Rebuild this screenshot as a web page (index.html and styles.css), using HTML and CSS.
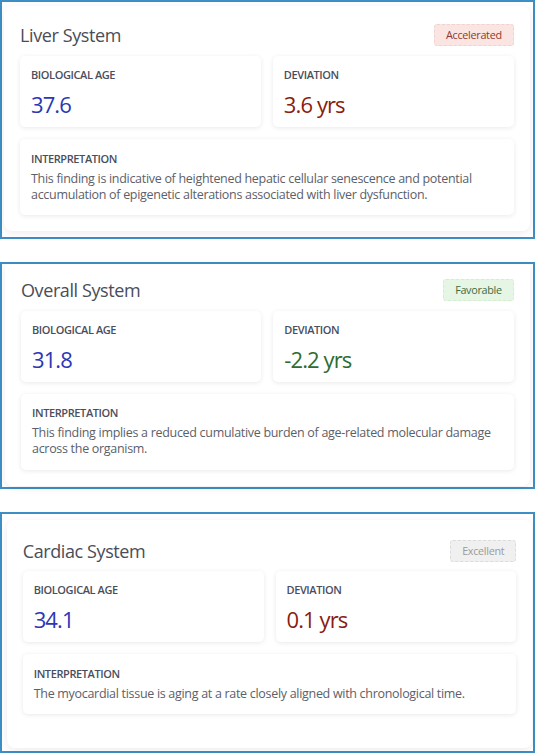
FILE: index.html
```html
<!DOCTYPE html>
<html lang="en">
<head>
<meta charset="utf-8">
<title>System Ages</title>
<link rel="stylesheet" href="styles.css">
</head>
<body>
<main class="page">
  <section class="frame frame-liver">
    <div class="card card-liver">
      <div class="card-head">
        <h2 class="title">Liver System</h2>
        <span class="badge badge-accel">Accelerated</span>
      </div>
      <div class="metrics">
        <div class="box">
          <div class="label">BIOLOGICAL AGE</div>
          <div class="value value-blue">37.6</div>
        </div>
        <div class="box">
          <div class="label">DEVIATION</div>
          <div class="value value-red">3.6 yrs</div>
        </div>
      </div>
      <div class="box box-interp">
        <div class="label">INTERPRETATION</div>
        <p class="text">This finding is indicative of heightened hepatic cellular senescence and potential accumulation of epigenetic alterations associated with liver dysfunction.</p>
      </div>
    </div>
  </section>

  <section class="frame frame-overall">
    <div class="card card-overall">
      <div class="card-head">
        <h2 class="title">Overall System</h2>
        <span class="badge badge-fav">Favorable</span>
      </div>
      <div class="metrics">
        <div class="box">
          <div class="label">BIOLOGICAL AGE</div>
          <div class="value value-blue">31.8</div>
        </div>
        <div class="box">
          <div class="label">DEVIATION</div>
          <div class="value value-green">-2.2 yrs</div>
        </div>
      </div>
      <div class="box box-interp">
        <div class="label">INTERPRETATION</div>
        <p class="text">This finding implies a reduced cumulative burden of age-related molecular damage across the organism.</p>
      </div>
    </div>
  </section>

  <section class="frame frame-cardiac">
    <div class="card card-cardiac">
      <div class="card-head">
        <h2 class="title">Cardiac System</h2>
        <span class="badge badge-exc">Excellent</span>
      </div>
      <div class="metrics">
        <div class="box">
          <div class="label">BIOLOGICAL AGE</div>
          <div class="value value-blue">34.1</div>
        </div>
        <div class="box">
          <div class="label">DEVIATION</div>
          <div class="value value-red">0.1 yrs</div>
        </div>
      </div>
      <div class="box box-interp">
        <div class="label">INTERPRETATION</div>
        <p class="text">The myocardial tissue is aging at a rate closely aligned with chronological time.</p>
      </div>
    </div>
  </section>
</main>
</body>
</html>
```

FILE: styles.css
```css
* {
  box-sizing: border-box;
}

html, body {
  margin: 0;
  padding: 0;
  background: #ffffff;
}

body {
  font-family: "Open Sans", "Noto Sans", sans-serif;
  color: #4a4d57;
}

.page {
  display: flex;
  flex-direction: column;
  width: 535px;
}

.frame {
  border: 2px solid #3d8ec5;
  background: #ffffff;
}

.frame-liver {
  padding: 4px 3.3px 6px 2px;
  margin-bottom: 23px;
}

.frame-overall {
  padding: 0 3.3px 0.7px 3px;
  margin-bottom: 23px;
}

.frame-cardiac {
  padding: 6.7px 0.7px 3px 4.7px;
}

.card {
  background: #ffffff;
  border-radius: 8px;
  box-shadow: 0 2px 8px rgba(0, 0, 0, 0.08);
  padding: 18px 16px 16.5px 16px;
}

.card-overall {
  padding-top: 14.3px;
  border-top-left-radius: 0;
  border-top-right-radius: 0;
}

.card-cardiac {
  padding-top: 20px;
  padding-bottom: 34px;
}

.card-head {
  display: flex;
  align-items: center;
  justify-content: space-between;
  height: 22px;
  margin-bottom: 10px;
}

.card-cardiac .card-head {
  margin-bottom: 9px;
}

.title {
  margin: 0;
  font-size: 18px;
  line-height: 22px;
  font-weight: 400;
  letter-spacing: -0.4px;
  color: #4a4d57;
}

.badge {
  display: inline-block;
  height: 22px;
  line-height: 20px;
  padding: 0 11px;
  font-size: 10.8px;
  letter-spacing: -0.3px;
  border-radius: 3px;
  border: 1px dashed transparent;
}

.badge-accel {
  background: #fbe5e2;
  color: #8e3a30;
  border-color: #f1d2cd;
}

.badge-fav {
  background: #e6f6e4;
  color: #3f6a3f;
  border-color: #d5ecd2;
}

.badge-exc {
  background: #f0f0f0;
  color: #9b9b9b;
  border-color: #dcdcdc;
}

.metrics {
  display: grid;
  grid-template-columns: 1fr 1fr;
  gap: 12px;
  margin-bottom: 12px;
}

.card-cardiac .metrics {
  margin-bottom: 11.7px;
}

.box {
  background: #ffffff;
  border-radius: 5px;
  box-shadow: 0 1px 5px rgba(0, 0, 0, 0.09);
  padding: 11px 11px 9px 11px;
  height: 71px;
}

.label {
  font-size: 11px;
  line-height: 15px;
  font-weight: 600;
  letter-spacing: -0.4px;
  color: #4a4e5c;
}

.value {
  margin-top: 8px;
  font-size: 22px;
  line-height: 28px;
  font-weight: 500;
  letter-spacing: -0.9px;
}

.value-blue {
  color: #2b37b6;
}

.value-red {
  color: #8a1c10;
}

.value-green {
  color: #2e6c2f;
}

.box-interp {
  height: auto;
  padding: 11.5px 11px 12.4px 11px;
}

.text {
  margin: 5px 0 0 0;
  font-size: 12.5px;
  line-height: 16px;
  letter-spacing: -0.3px;
  color: #5d6068;
}
```
